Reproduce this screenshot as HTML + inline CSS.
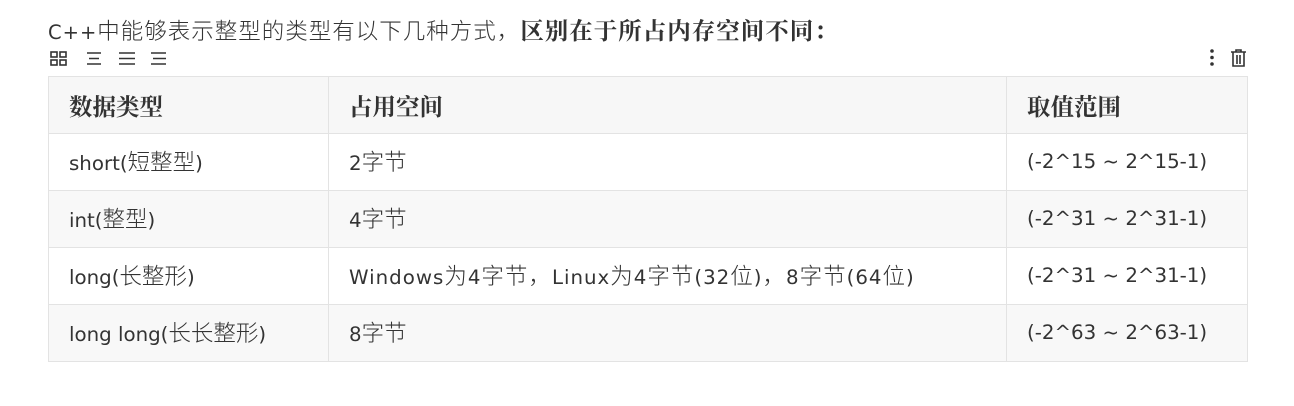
<!DOCTYPE html>
<html><head><meta charset="utf-8"><style>
body{margin:0;width:1294px;height:406px;background:#fff;font-family:"DejaVu Sans","Noto Sans CJK SC",sans-serif;color:#333;position:relative;overflow:hidden}
.c{font-family:"Noto Sans CJK SC",sans-serif;font-size:22.5px;font-weight:300}
.t{position:absolute;left:48px;top:14px;font-size:19.5px;line-height:30px;white-space:nowrap;letter-spacing:1px}
.t b{font-family:"Noto Serif CJK SC",serif;font-weight:bold;font-size:23.5px}
.icons{position:absolute;left:50px;top:50px}
table{position:absolute;left:48px;top:76px;border-collapse:collapse;width:1200px;font-size:19.8px;line-height:26px}
td,th{border:1px solid #e3e3e3;height:56px;padding:0 0 0 20px;text-align:left;vertical-align:middle;white-space:nowrap}
th{font-family:"Noto Serif CJK SC",serif;font-weight:bold;background:#f7f7f7;font-size:23.5px}
tr.g td{background:#f8f8f8}
.ls{letter-spacing:1px}
</style></head><body>
<div class="t">C++<span class="c">中能够表示整型的类型有以下几种方式，</span><b>区别在于所占内存空间不同：</b></div>
<svg class="icons" width="120" height="18" viewBox="0 0 120 18" fill="none" stroke="#333" stroke-width="1.6">
<rect x="1" y="2" width="6" height="5"/><rect x="10" y="2" width="6" height="5"/><rect x="1" y="10" width="6" height="5"/><rect x="10" y="10" width="6" height="5"/>
<path d="M37 3h14M39 8.5h10M37 14h14"/>
<path d="M69 3h16M69 8.5h16M69 14h16"/>
<path d="M101 3h15M103 8.5h13M101 14h15"/>
</svg>
<svg style="position:absolute;left:1205px;top:48px" width="45" height="20" viewBox="0 0 45 20" fill="#333" stroke="#333">
<circle cx="7" cy="3" r="1.8" stroke="none"/><circle cx="7" cy="9.5" r="1.8" stroke="none"/><circle cx="7" cy="16" r="1.8" stroke="none"/>
<path d="M26 4h15M31 4V2h5v2M28 4v14h11V4M32 7v9M35 7v9" fill="none" stroke-width="1.6"/>
</svg>
<table>
<tr><th style="width:259px">数据类型</th><th style="width:657px">占用空间</th><th>取值范围</th></tr>
<tr><td>short(<span class="c">短整型</span>)</td><td>2<span class="c">字节</span></td><td>(-2^15 ~ 2^15-1)</td></tr>
<tr class="g"><td>int(<span class="c">整型</span>)</td><td>4<span class="c">字节</span></td><td>(-2^31 ~ 2^31-1)</td></tr>
<tr><td>long(<span class="c">长整形</span>)</td><td class="ls">Windows<span class="c">为</span>4<span class="c">字节，</span>Linux<span class="c">为</span>4<span class="c">字节</span>(32<span class="c">位</span>)<span class="c">，</span>8<span class="c">字节</span>(64<span class="c">位</span>)</td><td>(-2^31 ~ 2^31-1)</td></tr>
<tr class="g"><td>long long(<span class="c">长长整形</span>)</td><td>8<span class="c">字节</span></td><td>(-2^63 ~ 2^63-1)</td></tr>
</table>
</body></html>
